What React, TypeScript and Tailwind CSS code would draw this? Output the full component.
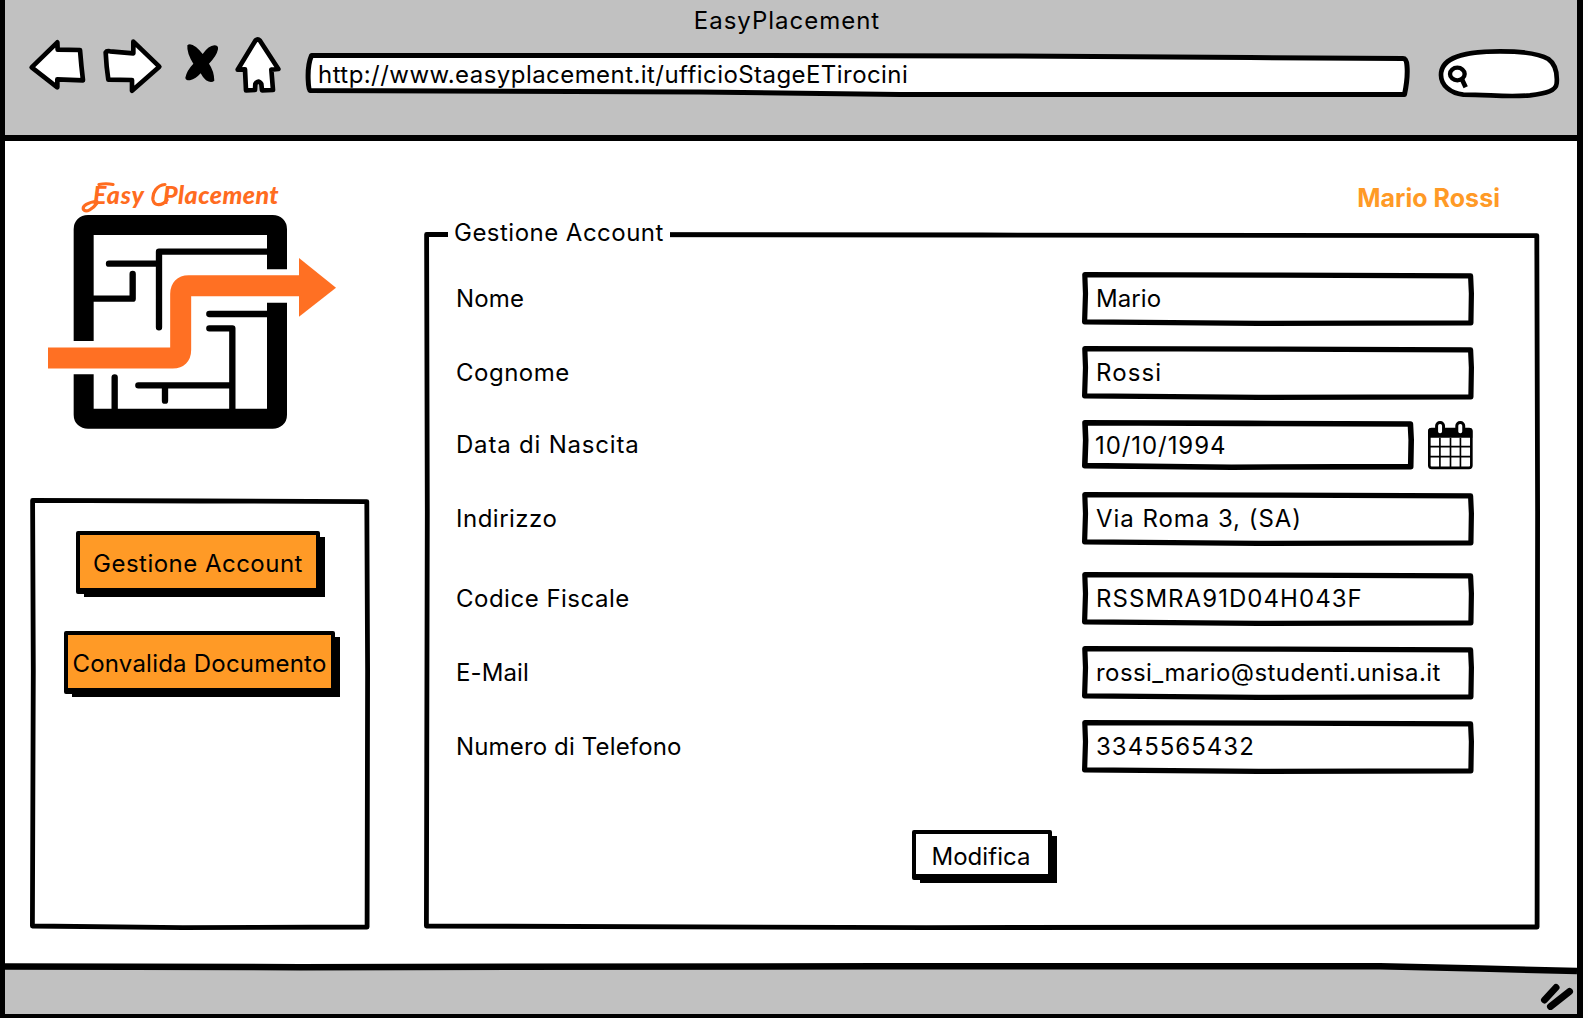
import React from "react";

const LABEL = "whitespace-nowrap text-2xl leading-8";

/* Slightly uneven pen outline laid behind a box of the given size. */
function Sketch({ w, h, pen = 4.8 }: { w: number; h: number; pen?: number }) {
  const p = pen / 2;
  const d = `M${p + 0.2} ${p} L${w * 0.5} ${p + 0.6} L${w - p - 0.8} ${p + 1.2} L${w - p} ${h * 0.4} L${w - p - 0.5} ${h - p - 0.6} L${w * 0.45} ${h - p} L${p} ${h - p - 1.6} L${p + 0.9} ${h * 0.4} Z`;
  return (
    <svg className="pointer-events-none absolute inset-0" width={w} height={h} viewBox={`0 0 ${w} ${h}`}>
      <path d={d} fill="none" stroke="#000" strokeWidth={pen} strokeLinejoin="round" />
    </svg>
  );
}

function Field({ label, value, labelClass, valueClass, rowClass }: { label: string; value: string; labelClass: string; valueClass: string; rowClass: string }) {
  return (
    <div className={`flex h-[54px] items-center ${rowClass}`}>
      <span className={`w-[626px] ${LABEL} ${labelClass}`}>{label}</span>
      <div className="relative flex h-[54px] w-[392px] items-center pl-3.5">
        <Sketch w={392} h={54} pen={5.2} />
        <span className={`${LABEL} ${valueClass}`}>{value}</span>
      </div>
    </div>
  );
}

function Button({ children, box, face }: { children: React.ReactNode; box: string; face: string }) {
  return (
    <div className={`relative ${box}`}>
      <div className="absolute -right-[5px] -bottom-[3px] left-2 top-1.5 bg-black" />
      <button className={`relative flex h-full w-full items-center justify-center rounded-[2px] border-4 border-b-[6px] border-black ${face}`}>{children}</button>
    </div>
  );
}

function Wordmark() {
  return (
    <p className="relative flex h-[35px] pl-[63px] font-[Lato,sans-serif] text-[25px] leading-8 font-black italic whitespace-nowrap text-[#ff6c1f]">
      <span className="w-[70px] tracking-[0.8px]">Easy</span>
      <span className="tracking-[0.45px]">Placement</span>
      <svg className="absolute top-0 left-[50px]" width="130" height="36" viewBox="80 178 130 36">
        <path d="M97 201.500C88 202 82 206 83.500 209.500C86 213 93 209 97 203M165 184.500C157 185 152 193 153 200C154.500 206.500 162 206 167 200M99 184.500Q106 183 113 184.500" fill="none" stroke="#ff6c1f" strokeWidth="3.2" strokeLinecap="round" />
      </svg>
    </p>
  );
}

function Logo() {
  return (
    <svg className="mt-px ml-[18px] block" width="288" height="216" viewBox="84 162 864 648">
      <g fill="none" stroke="#000">
        <path d="M191 543V208Q191 195 204 195H758Q771 195 771 208V328M771 428V764Q771 776 758 776H204Q191 776 191 764V643" strokeWidth="60" />
        <g strokeWidth="19" strokeLinecap="round" strokeLinejoin="round">
          <path d="M267 311H412M742 275H417V502M338 342V416H220M568 462H742M568 505H637V750M284 652V750M355 676H630M435 680V722" />
        </g>
      </g>
      <path d="M84 594H458Q482 594 482 570V402Q482 377 506 377H842" fill="none" stroke="#ff7023" strokeWidth="63" />
      <path d="M837 294L948 383L837 470Z" fill="#ff7023" />
    </svg>
  );
}

function Calendar() {
  return (
    <svg className="ml-[13px] block" width="47" height="50" viewBox="1100 510 142 150">
      <rect x="1107" y="537" width="127" height="117" rx="7" fill="#fff" stroke="#000" strokeWidth="8" />
      <path d="M1104 563V542Q1104 534 1112 534H1230Q1237 534 1237 542V563Z" fill="#000" />
      <rect x="1129" y="517" width="21" height="37" rx="10" fill="#fff" stroke="#000" strokeWidth="9" />
      <rect x="1190" y="517" width="21" height="37" rx="10" fill="#fff" stroke="#000" strokeWidth="9" />
      <path d="M1139 563V652M1171 563V652M1201 563V652M1108 590H1234M1108 620H1234" stroke="#000" strokeWidth="5" />
    </svg>
  );
}

export default function App() {
  return (
    <div className="flex h-[1018px] w-[1588px] bg-[#fdfdfd] font-[Inter,sans-serif] text-black">
      <div className="flex h-[1018px] w-[1583px] flex-col overflow-hidden border-r-[6px] border-b-4 border-l-[5px] border-black bg-white">
        <header className="h-[141px] shrink-0 border-b-[6px] border-black bg-[#c1c1c1]">
          <h1 className="h-[35px] pr-2 text-center text-2xl leading-[42px] font-normal tracking-[0.98px]">EasyPlacement</h1>
          <div className="flex h-[66px] items-start pl-[23px]">
            <svg width="58" height="60" viewBox="84 105 174 180">
              <path d="M95 202L172 127L173 149L240 150Q244 200 249 241L172 238V262Z" fill="#fff" stroke="#000" strokeWidth="14" strokeLinejoin="round" />
            </svg>
            <svg className="ml-4" width="61" height="60" viewBox="306 105 183 180">
              <path d="M317 157Q320 152 330 154L400 160V125L478 200L396 272V240L325 239Q319 200 317 157Z" fill="#fff" stroke="#000" strokeWidth="14" strokeLinejoin="round" />
            </svg>
            <svg className="ml-[21px]" width="36" height="60" viewBox="552 105 108 180">
              <path d="M562 136Q570 127 588 141Q600 151 608 162Q626 137 643 136Q656 136 654 148Q650 168 627 191Q642 212 643 242Q634 250 618 241Q608 232 602 220Q588 236 570 241Q557 242 556 233Q560 212 580 191Q560 160 562 136Z" fill="#000" />
            </svg>
            <svg className="ml-3.5" width="48" height="60" viewBox="702 105 144 180">
              <path d="M766 122Q773 115 780 122L835 207L814 209L819 270L786 271L784 252Q775 237 766 252L765 270L738 271L735 208L713 209Z" fill="#fff" stroke="#000" strokeWidth="14" strokeLinejoin="round" />
            </svg>
            <div className="relative mt-[15px] ml-[23px] flex h-[50px] w-[1107px] items-center pl-[13px]">
              <svg className="absolute inset-0" width="1107" height="50" viewBox="305 50 1107 50">
                <path d="M311.500 55.500L700 55.500L1000 56L1250 57.500L1403 58.500Q1406.500 58.500 1407 66Q1408 78 1404.500 94.500L900 94.500L700 92L310 90.500Q308.500 90 308.200 80Q307.500 65 311.500 55.500Z" fill="#fff" stroke="#000" strokeWidth="5" strokeLinejoin="round" />
              </svg>
              <span className="relative whitespace-nowrap text-2xl leading-8 tracking-[0.44px]">http://www.easyplacement.it/ufficioStageETirocini</span>
            </div>
            <svg className="mt-[13px] ml-[26px]" width="122" height="52" viewBox="774 144 366 156">
              <path d="M783 225C783 185 820 154 960 154C1040 154 1085 165 1105 177C1130 195 1132 225 1130 250C1128 272 1100 280 1050 286C980 292 930 284 850 284C810 280 783 255 783 225Z" fill="#fff" stroke="#000" strokeWidth="14" />
              <ellipse cx="832" cy="222" rx="22" ry="19" fill="#fff" stroke="#000" strokeWidth="13" />
              <path d="M845 236L857 262" stroke="#000" strokeWidth="14" strokeLinecap="butt" />
            </svg>
          </div>
        </header>

        <main className="flex flex-1">
          <aside className="w-[394px] shrink-0 pt-[37px] pl-[25px]">
            <Wordmark />
            <Logo />
            <nav className="relative mt-[68px] h-[432px] w-[340px] pt-[33px]">
              <Sketch w={340} h={432} />
              <Button box="ml-[46px] h-[63px] w-[244px]" face="bg-[#ff9a26]">
                <span className={`pt-1 ${LABEL} tracking-[0.48px]`}>Gestione Account</span>
              </Button>
              <Button box="mt-[37px] ml-[34px] h-[63px] w-[271px]" face="bg-[#ff9a26]">
                <span className={`pt-1 ${LABEL} tracking-[0.22px]`}>Convalida Documento</span>
              </Button>
            </nav>
          </aside>

          <section className="ml-[25px] w-[1116px] pt-[41px]">
            <p className="h-[50px] pr-10 text-right text-[25px] leading-8 font-bold tracking-[0.04px] text-[#ff9a26]">Mario Rossi</p>
            <div className="relative h-[698px] pt-10 pl-8">
              <Sketch w={1116} h={698} />
              <h2 className={`absolute -top-[15px] left-6 bg-white pr-1.5 pl-1.5 font-normal ${LABEL} tracking-[0.48px]`}>Gestione Account</h2>
              <Field rowClass="" label="Nome" labelClass="tracking-[0.2px]" value="Mario" valueClass="tracking-[0.1px]" />
              <Field rowClass="mt-5" label="Cognome" labelClass="tracking-[0.5px]" value="Rossi" valueClass="tracking-[1.1px]" />
              <div className="mt-5 flex h-[50px] items-center">
                <span className={`w-[626px] ${LABEL} tracking-[0.8px]`}>Data di Nascita</span>
                <div className="relative flex h-[50px] w-[332px] items-center pl-[13px]">
                  <Sketch w={332} h={50} pen={5.6} />
                  <span className={`pt-0.5 ${LABEL} tracking-[0.93px]`}>10/10/1994</span>
                </div>
                <Calendar />
              </div>
              <Field rowClass="mt-[22px]" label="Indirizzo" labelClass="tracking-[0.5px]" value="Via Roma 3, (SA)" valueClass="tracking-[0.95px]" />
              <Field rowClass="mt-[26px]" label="Codice Fiscale" labelClass="tracking-[0.5px]" value="RSSMRA91D04H043F" valueClass="tracking-[1.05px]" />
              <Field rowClass="mt-5" label="E-Mail" labelClass="tracking-[0.1px]" value="rossi_mario@studenti.unisa.it" valueClass="tracking-[0.43px]" />
              <Field rowClass="mt-5" label="Numero di Telefono" labelClass="tracking-[0.15px]" value="3345565432" valueClass="tracking-[1px]" />
              <Button box="mt-14 ml-[456px] h-[50px] w-[140px]" face="bg-white">
                <span className={`pt-1.5 pr-0.5 ${LABEL} tracking-[0.05px]`}>Modifica</span>
              </Button>
            </div>
          </section>
        </main>

        <footer className="relative flex h-[50px] shrink-0 items-end justify-end bg-[#c1c1c1]">
          <svg className="absolute -top-1 left-0" width="1572" height="16" viewBox="5 960 1572 16">
            <path d="M5 960V967L1400 966L1577 971V960Z" fill="#fff" />
            <path d="M5 966.500L300 967.200L880 966.200L1380 966.200L1480 968.500L1577 971" fill="none" stroke="#000" strokeWidth="6.500" />
          </svg>
          <svg className="mr-[3px] mb-1" width="36" height="28" viewBox="1538 982 36 28">
            <path d="M1544.500 1000L1556 987.500M1550.500 1006.500L1569.500 991.500" stroke="#000" strokeWidth="7" strokeLinecap="round" />
          </svg>
        </footer>
      </div>
    </div>
  );
}
